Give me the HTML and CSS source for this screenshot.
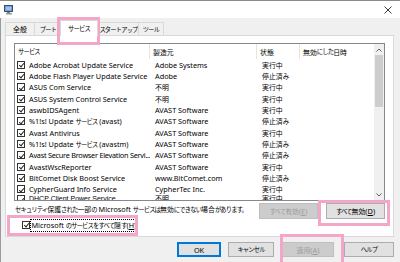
FILE: index.html
```html
<!DOCTYPE html>
<html lang="ja">
<head>
<meta charset="utf-8">
<link rel="stylesheet" href="styles.css">
</head>
<body>
<div class="win">
  <div class="titlebar">
    <svg class="appicon" width="10" height="10" viewBox="0 0 10 10">
      <rect x="0.5" y="0.5" width="8" height="6" fill="#5a7fb8" stroke="#3a4f73"/>
      <rect x="1.5" y="1.5" width="6" height="4" fill="#9cc3ea"/>
      <rect x="3" y="7" width="3" height="1" fill="#777"/>
      <rect x="2" y="8" width="6" height="1.5" fill="#999"/>
    </svg>
    <svg class="close" width="8" height="8" viewBox="0 0 8 8">
      <path d="M0.5 0.5 L7.5 7.5 M7.5 0.5 L0.5 7.5" stroke="#222" stroke-width="0.9" fill="none"/>
    </svg>
  </div>
  <div class="body">
    <div class="tabs">
      <div class="tab t1"><span class="kj">全般</span></div>
      <div class="tab t2"><span class="kn">ブート</span></div>
      <div class="tab t3 sel"><span class="kn">サービス</span></div>
      <div class="tab t4"><span class="kn">スタートアップ</span></div>
      <div class="tab t5"><span class="kn">ツール</span></div>
    </div>
    <div class="panel">
      <div class="list">
        <div class="cols">
          <div class="hdr">
            <div class="c c1"><span class="kn">サービス</span></div>
            <div class="c c2"><span class="kj">製造元</span></div>
            <div class="c c3"><span class="kj">状態</span></div>
            <div class="c c4"><span class="kj">無効</span><span class="kn">にした</span><span class="kj">日時</span></div>
          </div>
          <div class="rows">
            <div class="row"><div class="c c1"><span class="cb"></span>Adobe Acrobat Update Service</div><div class="c c2">Adobe Systems</div><div class="c c3"><span class="kj">実行中</span></div></div>
            <div class="row"><div class="c c1"><span class="cb"></span>Adobe Flash Player Update Service</div><div class="c c2">Adobe</div><div class="c c3"><span class="kj">停止済</span><span class="kn">み</span></div></div>
            <div class="row"><div class="c c1"><span class="cb"></span>ASUS Com Service</div><div class="c c2"><span class="kj">不明</span></div><div class="c c3"><span class="kj">実行中</span></div></div>
            <div class="row"><div class="c c1"><span class="cb"></span>ASUS System Control Service</div><div class="c c2"><span class="kj">不明</span></div><div class="c c3"><span class="kj">実行中</span></div></div>
            <div class="row"><div class="c c1"><span class="cb"></span>aswbIDSAgent</div><div class="c c2">AVAST Software</div><div class="c c3"><span class="kj">実行中</span></div></div>
            <div class="row"><div class="c c1"><span class="cb"></span>%1!s! Update&nbsp;<span class="kn">サービス</span>&nbsp;(avast)</div><div class="c c2">AVAST Software</div><div class="c c3"><span class="kj">停止済</span><span class="kn">み</span></div></div>
            <div class="row"><div class="c c1"><span class="cb"></span>Avast Antivirus</div><div class="c c2">AVAST Software</div><div class="c c3"><span class="kj">実行中</span></div></div>
            <div class="row"><div class="c c1"><span class="cb"></span>%1!s! Update&nbsp;<span class="kn">サービス</span>&nbsp;(avastm)</div><div class="c c2">AVAST Software</div><div class="c c3"><span class="kj">停止済</span><span class="kn">み</span></div></div>
            <div class="row"><div class="c c1"><span class="cb"></span><span class="tight">Avast Secure Browser Elevation Servi...</span></div><div class="c c2">AVAST Software</div><div class="c c3"><span class="kj">停止済</span><span class="kn">み</span></div></div>
            <div class="row"><div class="c c1"><span class="cb"></span>AvastWscReporter</div><div class="c c2">AVAST Software</div><div class="c c3"><span class="kj">実行中</span></div></div>
            <div class="row"><div class="c c1"><span class="cb"></span>BitComet Disk Boost Service</div><div class="c c2">www.BitComet.com</div><div class="c c3"><span class="kj">停止済</span><span class="kn">み</span></div></div>
            <div class="row"><div class="c c1"><span class="cb"></span>CypherGuard Info Service</div><div class="c c2">CypherTec Inc.</div><div class="c c3"><span class="kj">実行中</span></div></div>
            <div class="row part"><div class="c c1"><span class="cb"></span>DHCP Client Power Service</div><div class="c c2"><span class="kj">不明</span></div><div class="c c3"><span class="kj">実行中</span></div></div>
          </div>
        </div>
        <div class="vscroll">
          <div class="arrow"><svg width="6" height="4" viewBox="0 0 6 4"><path d="M0.5 3.5 L3 1 L5.5 3.5" stroke="#606060" fill="none"/></svg></div>
          <div class="track"><div class="thumb"></div></div>
          <div class="arrow"><svg width="6" height="4" viewBox="0 0 6 4"><path d="M0.5 0.5 L3 3 L5.5 0.5" stroke="#606060" fill="none"/></svg></div>
        </div>
      </div>
      <div class="noterow">
        <span class="note"><span class="kn">セキュリティ</span><span class="kj">保護</span><span class="kn">された</span><span class="kj">一部</span><span class="kn">の</span> Microsoft <span class="kn">サービスは</span><span class="kj">無効</span><span class="kn">にできない</span><span class="kj">場合</span><span class="kn">があります。</span></span>
        <div class="btn dis wide"><span class="kn">すべて</span><span class="kj">有効</span>(<u>E</u>)</div>
        <div class="btn wide"><span class="kn">すべて</span><span class="kj">無効</span>(<u>D</u>)</div>
      </div>
      <div class="hiderow">
        <span class="cb"></span><span class="hidelabel">Microsoft <span class="kn">のサービスをすべて</span><span class="kj">隠</span><span class="kn">す</span>(<u>H</u>)</span>
      </div>
    </div>
    <div class="footer">
      <div class="btn def b1">OK</div>
      <div class="btn b2"><span class="kn">キャンセル</span></div>
      <div class="btn dis b3"><span class="kj">適用</span>(<u>A</u>)</div>
      <div class="btn b4"><span class="kn">ヘルプ</span></div>
    </div>
  </div>
  <div class="hl hl-tab"></div>
  <div class="hl hl-dis"></div>
  <div class="hl hl-hide"></div>
  <div class="hl hl-apply"></div>
</div>
</body>
</html>
```

FILE: styles.css
```css
* { box-sizing: border-box; }
html, body { margin: 0; padding: 0; }
body {
  width: 400px; height: 262px; overflow: hidden;
  font-family: "Noto Sans", "Noto Sans CJK JP", sans-serif;
  font-size: 7.3px; color: #000;
}
.kj, .kn {
  font-family: "Noto Sans CJK JP", "Noto Sans", sans-serif;
}
.kj { font-size: 6.9px; }
.kn { font-size: 6.3px; letter-spacing: -0.85px; }
.tight { letter-spacing: -0.25px; }
.win {
  position: relative;
  width: 400px; height: 262px;
  background: #f0f0f0;
  border-top: 1px solid #8a8a8a;
  display: flex; flex-direction: column;
}
.titlebar {
  height: 17px; background: #fff; flex: none;
  display: flex; align-items: center; justify-content: space-between;
  padding: 0 8px 0 4px;
}
.appicon { display: block; }
.close { display: block; }
.body {
  flex: 1;
  border-left: 1px solid #9a9a9a;
  padding: 2px 6px 0 4px;
  display: flex; flex-direction: column;
}
.tabs { display: flex; align-items: flex-end; height: 15px; flex: none; }
.tab {
  height: 13px; border: 1px solid #d9d9d9; border-bottom: none;
  background: #f0f0f0; margin-right: -1px; flex: none;
  display: flex; align-items: center; justify-content: center;
  white-space: nowrap;
}
.t1 { width: 30px; }
.t2 { width: 28px; }
.t4 { width: 43px; padding-left: 2px; }
.t5 { width: 26px; }
.tab.sel {
  height: 16px; background: #fff; position: relative; z-index: 1;
  margin-left: -1px; margin-right: -2px; width: 38px; margin-bottom: -1px;
}
.panel {
  background: #fff; border: 1px solid #d9d9d9;
  height: 202px; flex: none;
  padding: 7px 0 0 8px;
  display: flex; flex-direction: column;
}
.list {
  width: 371px; height: 158px; flex: none;
  border: 1px solid #828790;
  display: flex;
  overflow: hidden;
}
.cols { flex: 1; overflow: hidden; }
.hdr { display: flex; height: 15px; align-items: center; }
.hdr .c { height: 15px; display: flex; align-items: center; border-right: 1px solid #e5e5e5; padding-left: 3px; }
.c { white-space: nowrap; overflow: hidden; flex: none; }
.c1 { width: 135px; }
.c2 { width: 107px; }
.c3 { width: 43px; }
.c4 { width: 72px; }
.hdr .c4 { border-right: none; }
.row { display: flex; height: 11.35px; align-items: center; }
.row.part {
  align-items: flex-start; height: 4.5px; overflow: hidden; padding-top: 0.3px;
  font-family: "Liberation Sans", "Noto Sans CJK JP", sans-serif; font-size: 7px;
  line-height: 8px;
}
.row.part .kj { font-family: "Liberation Sans", "Noto Sans CJK JP", sans-serif; font-size: 6.9px; }
.row .c { padding-left: 5px; }
.row .c1 { padding-left: 2px; display: flex; align-items: center; }
.row.part .c1 { align-items: flex-start; }
.cb {
  display: inline-block; width: 8px; height: 8px; flex: none;
  border: 1px solid #333; background: #fff; margin-right: 4px; position: relative;
}
.cb::after {
  content: ""; position: absolute; left: 1.8px; top: 0.2px;
  width: 2px; height: 4.2px;
  border-right: 1px solid #222; border-bottom: 1px solid #222;
  transform: rotate(40deg);
}
.vscroll {
  width: 10px; background: #f0f0f0; display: flex; flex-direction: column; flex: none;
}
.arrow { height: 11px; display: flex; align-items: center; justify-content: center; }
.arrow svg { display: block; }
.track { flex: 1; padding: 0 1px; }
.thumb { height: 52px; background: #cdcdcd; }
.noterow {
  display: flex; align-items: flex-start; height: 18px; flex: none;
  width: 371px;
}
.note { flex: 1; padding-left: 1px; padding-top: 2.5px; white-space: nowrap; line-height: 10px; }
.btn {
  height: 15px; border: 1px solid #adadad; background: #e1e1e1;
  display: flex; align-items: baseline; justify-content: center;
  padding-top: 1.5px;
  flex: none; white-space: nowrap;
}
.btn.wide { width: 59px; margin-left: 8px; margin-top: 2px; height: 16px; padding-top: 2px; }
.btn.dis { background: #cccccc; border-color: #bfbfbf; color: #9d9d9d; }
.btn.def { border: 1px solid #0078d7; box-shadow: inset 0 0 0 1px #0078d7; }
.hiderow { display: flex; align-items: center; height: 12px; padding-left: 8px; flex: none; }
.hiderow .cb { margin-right: 1px; }
.hidelabel { outline: 1px dotted #000; outline-offset: 0; padding: 0 0.5px; line-height: 10px; }
.footer {
  display: flex; justify-content: flex-end;
  padding-top: 5px; padding-right: 0;
}
.b1 { width: 44px; }
.b2 { width: 46px; margin-left: 7px; }
.b3 { width: 52px; margin-left: 8px; }
.b4 { width: 50px; margin-left: 10px; }
.hl { position: absolute; border: 3px solid #f4a6c8; }
.hl-tab { left: 57px; top: 16px; width: 43px; height: 28px; }
.hl-dis { left: 318px; top: 199px; width: 72px; height: 26px; }
.hl-hide { left: 7px; top: 214px; width: 131px; height: 21px; }
.hl-apply { left: 280px; top: 233px; width: 64px; height: 29px; border-bottom: none; }
```
